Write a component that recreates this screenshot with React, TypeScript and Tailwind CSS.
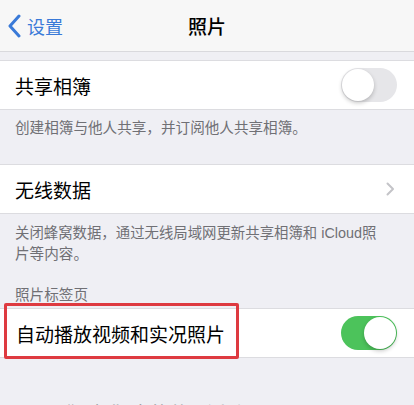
import React from "react";

const font = { fontFamily: '"Noto Sans CJK SC", "Noto Sans", sans-serif' };

function Toggle({ on }: { on: boolean }) {
  return (
    <div
      className={
        "relative w-[56px] h-[34px] rounded-full " +
        (on ? "bg-[#4cc35b]" : "bg-[#e6e6e9]")
      }
    >
      <div
        className={
          "absolute top-[1px] w-[32px] h-[32px] rounded-full bg-white shadow-[0_2px_4px_rgba(0,0,0,0.22)] " +
          (on ? "right-[1px]" : "left-[1px]")
        }
      />
    </div>
  );
}

export default function App() {
  return (
    <div
      className="relative w-[414px] h-[405px] overflow-hidden bg-[#efeff4] text-black"
      style={font}
    >
      {/* Nav bar */}
      <div className="relative h-[52px] bg-[#f7f7f7] border-b border-[#d9d9dd] flex items-center justify-center">
        <div className="absolute left-[7px] top-0 h-full flex items-center text-[#3a7ad8]">
          <svg width="15" height="24" viewBox="0 0 15 24" className="mr-[5px]">
            <path
              d="M12 2 L3 12 L12 22"
              fill="none"
              stroke="#3a7ad8"
              strokeWidth="3"
              strokeLinecap="round"
              strokeLinejoin="round"
            />
          </svg>
          <span className="text-[18px] leading-none">设置</span>
        </div>
        <span className="text-[19px] font-medium leading-none">照片</span>
      </div>

      <div className="h-[8px]" />

      {/* Cell 1 */}
      <div className="h-[50px] bg-white border-y border-[#dcdce0] flex items-center justify-between pl-[15px] pr-[17px]">
        <span className="text-[19px] leading-none">共享相簿</span>
        <Toggle on={false} />
      </div>

      {/* Footer 1 */}
      <div className="h-[54px] pl-[15px] pt-[7px] text-[14.6px] leading-[19px] text-[#707075] whitespace-nowrap">
        创建相簿与他人共享，并订阅他人共享相簿。
      </div>

      {/* Cell 2 */}
      <div className="h-[50px] bg-white border-y border-[#dcdce0] flex items-center justify-between pl-[15px] pr-[19px]">
        <span className="text-[19px] leading-none">无线数据</span>
        <svg width="9" height="14" viewBox="0 0 9 14">
          <path
            d="M1.5 1.5 L7 7 L1.5 12.5"
            fill="none"
            stroke="#c4c4c8"
            strokeWidth="2"
            strokeLinecap="round"
            strokeLinejoin="round"
          />
        </svg>
      </div>

      {/* Footer 2 + section header */}
      <div className="h-[94px] pl-[15px] pt-[8px] text-[14.6px] leading-[19px] text-[#707075] flex flex-col whitespace-nowrap">
        <div className="flex items-baseline text-[14.4px]">
          <span>关闭蜂窝数据，通过无线局域网更新共享相簿和</span>
          <span
            className="ml-[4px]"
            style={{ fontFamily: '"Liberation Sans", Arial, sans-serif' }}
          >
            iCloud
          </span>
          <span>照</span>
        </div>
        <div>片等内容。</div>
        <div className="mt-[22px]">照片标签页</div>
      </div>

      {/* Cell 3 */}
      <div className="h-[50px] bg-white border-y border-[#dcdce0] flex items-center justify-between pl-[16px] pr-[17px]">
        <span className="text-[19px] leading-none">自动播放视频和实况照片</span>
        <Toggle on={true} />
      </div>

      <div className="pl-[55px] pt-[45px] text-[19px] leading-[20px] text-[#8a8a8f] whitespace-nowrap">
        “回忆”中的节日活动
      </div>

      {/* Red highlight box (overlay) */}
      <div className="absolute left-[4px] top-[303px] w-[235px] h-[56px] border-[3px] border-[#de3a40] rounded-[2px] pointer-events-none" />
    </div>
  );
}
